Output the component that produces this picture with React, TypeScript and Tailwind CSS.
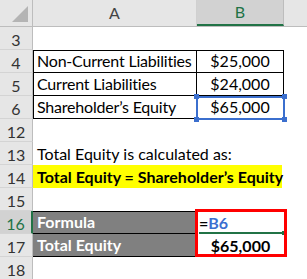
import React from 'react';

const FONT = { fontFamily: 'Lato, "Open Sans", sans-serif' };

function RowHead({ n, active }: { n: number; active?: boolean }) {
  return (
    <div
      className={
        'w-[33px] shrink-0 flex items-end justify-center pb-[1px] text-[16px] border-b border-[#d4d4d4] ' +
        (active
          ? 'bg-[#d2d2d2] text-[#217346] border-r-2 border-r-[#217346]'
          : 'bg-[#e6e6e6] text-[#333] border-r border-r-[#bdbdbd]')
      }
    >
      {n}
    </div>
  );
}

function Row({ n, active, children }: { n: number; active?: boolean; children?: React.ReactNode }) {
  return (
    <div className="flex h-[23px] whitespace-nowrap">
      <RowHead n={n} active={active} />
      {children}
    </div>
  );
}

export default function App() {
  return (
    <div
      className="relative w-[307px] h-[279px] overflow-hidden bg-white text-black text-[16px] leading-none"
      style={FONT}
    >
      {/* column headers */}
      <div className="flex h-[27px] bg-[#e6e6e6] border-b border-[#bdbdbd]">
        <div className="w-[33px] shrink-0 border-r border-[#bdbdbd] relative">
          <div className="absolute right-[4px] bottom-[4px] w-0 h-0 border-l-[16px] border-l-transparent border-b-[16px] border-b-[#b4b4b4]" />
        </div>
        <div className="w-[164px] shrink-0 flex items-center justify-center text-[#444] border-r border-[#d0d0d0]">
          A
        </div>
        <div className="w-[87px] shrink-0 flex items-center justify-center bg-[#d2d2d2] text-[#217346] border-r border-[#bdbdbd] border-b-2 border-b-[#217346]">
          B
        </div>
        <div className="flex-1" />
      </div>

      <Row n={3} />
      <Row n={4}>
        <div className="w-[164px] shrink-0 border border-black flex items-end pl-[3px] pb-[3px] tracking-[-0.2px] overflow-hidden">
          Non-Current Liabilities
        </div>
        <div className="w-[87px] shrink-0 border-y border-r border-black flex items-end justify-center pb-[3px]">
          $25,000
        </div>
      </Row>
      <Row n={5}>
        <div className="w-[164px] shrink-0 border-x border-b border-black flex items-end pl-[3px] pb-[3px] tracking-[-0.2px]">
          Current Liabilities
        </div>
        <div className="w-[87px] shrink-0 border-b border-r border-black flex items-end justify-center pb-[3px]">
          $24,000
        </div>
      </Row>
      <Row n={6}>
        <div className="w-[164px] shrink-0 border-x border-b border-black flex items-end pl-[3px] pb-[3px] tracking-[-0.2px]">
          Shareholder’s Equity
        </div>
        <div className="w-[87px] shrink-0 border-b border-r border-black flex items-end justify-center pb-[3px]">
          $65,000
        </div>
      </Row>
      <Row n={12} />
      <Row n={13}>
        <div className="flex-1 flex items-end pl-[4px] pb-[3px]">
          Total Equity is calculated as:
        </div>
      </Row>
      <Row n={14}>
        <div className="w-[249px] shrink-0 bg-[#ffff00] font-bold flex items-end pl-[4px] pb-[3px]">
          Total Equity = Shareholder’s Equity
        </div>
      </Row>
      <Row n={15} />
      <Row n={16} active>
        <div className="w-[164px] shrink-0 bg-[#808080] text-white font-bold border-y border-black flex items-end pl-[4px] pb-[3px]">
          Formula
        </div>
        <div className="w-[87px] shrink-0 font-bold flex items-end pl-[2px] pb-[3px]">
          <span>=</span>
          <span className="text-[#3c6fd0]">B6</span>
        </div>
      </Row>
      <Row n={17}>
        <div className="w-[164px] shrink-0 bg-[#808080] text-white font-bold border-b border-black flex items-end pl-[4px] pb-[3px]">
          Total Equity
        </div>
        <div className="w-[87px] shrink-0 font-bold flex items-end justify-center pb-[3px]">
          $65,000
        </div>
      </Row>
      <Row n={18} />

      {/* copy-reference highlight on B6 */}
      <div className="absolute left-[196px] top-[96px] w-[89px] h-[24px] border-2 border-[#3b6fce]">
        <div className="absolute -left-[4px] -top-[4px] w-[5px] h-[5px] bg-[#3b6fce]" />
        <div className="absolute -right-[4px] -top-[4px] w-[5px] h-[5px] bg-[#3b6fce]" />
        <div className="absolute -left-[4px] -bottom-[4px] w-[5px] h-[5px] bg-[#3b6fce]" />
        <div className="absolute -right-[4px] -bottom-[4px] w-[5px] h-[5px] bg-[#3b6fce]" />
      </div>

      {/* active cell bottom edge + fill handle */}
      <div className="absolute left-[199px] top-[232px] w-[84px] h-[2px] bg-[#217346]" />
      <div className="absolute left-[282px] top-[231px] w-[4px] h-[4px] bg-[#217346]" />

      {/* red callout box */}
      <div className="absolute left-[195px] top-[209px] w-[92px] h-[48px] border-[3.5px] border-[#ff0000]" />
    </div>
  );
}
